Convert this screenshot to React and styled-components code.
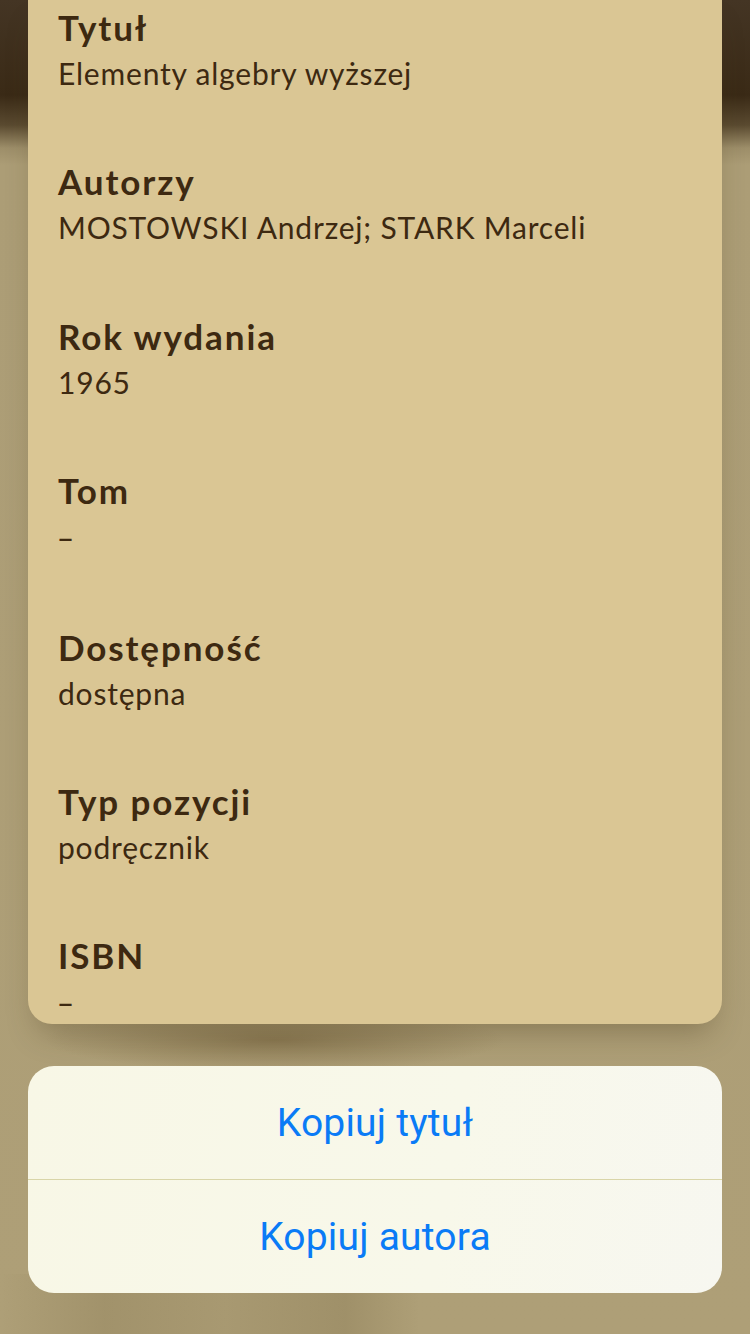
import React from "react"
import styled, { createGlobalStyle } from "styled-components"

const GlobalStyle = createGlobalStyle`
  html, body {
    margin: 0;
    padding: 0;
    background: #ae9f77;
  }
  * {
    box-sizing: border-box;
  }
`

const fields = [
  { label: "Tytuł", value: "Elementy algebry wyższej" },
  { label: "Autorzy", value: "MOSTOWSKI Andrzej; STARK Marceli" },
  { label: "Rok wydania", value: "1965" },
  { label: "Tom", value: null },
  { label: "Dostępność", value: "dostępna" },
  { label: "Typ pozycji", value: "podręcznik" },
  { label: "ISBN", value: null },
]

const actions = ["Kopiuj tytuł", "Kopiuj autora"]

function App() {
  return <Screen>
    <GlobalStyle/>
    <Card>
      {fields.map(f => (
        <Field key={f.label}>
          <Label>{f.label}</Label>
          <Value>{f.value ?? <Dash>–</Dash>}</Value>
        </Field>
      ))}
    </Card>
    <Sheet>
      {actions.map((a, i) => (
        <Action key={a} $first={i === 0}>{a}</Action>
      ))}
    </Sheet>
  </Screen>
}

export default App

const Screen = styled.div`
  width: 750px;
  height: 1334px;
  overflow: hidden;
  display: flex;
  flex-direction: column;
  gap: 42px;
  padding: 0 28px;
  background:
    radial-gradient(ellipse 230px 32px at 275px 1040px, rgba(115, 96, 58, 0.6), rgba(115, 96, 58, 0)),
    linear-gradient(90deg,
      rgba(0, 0, 0, 0) 0%,
      rgba(70, 55, 20, 0.12) 14%,
      rgba(70, 55, 20, 0.06) 30%,
      rgba(70, 55, 20, 0.14) 46%,
      rgba(0, 0, 0, 0) 56%,
      rgba(0, 0, 0, 0) 100%) bottom / 100% 60px no-repeat,
    linear-gradient(180deg, #443524 0px, #3a2a16 95px, #5a4a30 125px, #9d8e69 148px, #ac9d76 165px, #ae9f77 100%);
`
const Card = styled.div`
  display: flex;
  flex-direction: column;
  gap: 68.4px;
  height: 1024px;
  padding: 7px 30px 0 30px;
  background: #dac694;
  border-radius: 0 0 24px 24px;
  box-shadow: 0 18px 30px -10px rgba(70, 55, 25, 0.35);
`
const Field = styled.div`
  display: flex;
  flex-direction: column;
  gap: 6px;
`
const Label = styled.div`
  font-family: Lato, "Noto Sans", sans-serif;
  font-weight: 700;
  font-size: 35px;
  line-height: 40px;
  letter-spacing: 1.9px;
  color: #3d2911;
`
const Value = styled.div`
  font-family: Lato, "Noto Sans", sans-serif;
  font-weight: 400;
  font-size: 30px;
  line-height: 40px;
  letter-spacing: 0.8px;
  color: #3d2911;
`
const Dash = styled.span`
  font-family: "DejaVu Sans", sans-serif;
  font-size: 30px;
  letter-spacing: 0;
`
const Sheet = styled.div`
  display: flex;
  flex-direction: column;
  height: 227px;
  border-radius: 26px;
  overflow: hidden;
  background: linear-gradient(100deg, #f8f7e6 0%, #f8f8ea 60%, #f7f7f0 100%);
`
const Action = styled.div`
  flex: 1;
  display: flex;
  align-items: center;
  justify-content: center;
  font-family: Roboto, "Noto Sans", sans-serif;
  font-size: 39px;
  letter-spacing: 0.2px;
  color: #0a7bf6;
  border-top: ${p => p.$first ? "none" : "1.5px solid #d9d5a8"};
`
